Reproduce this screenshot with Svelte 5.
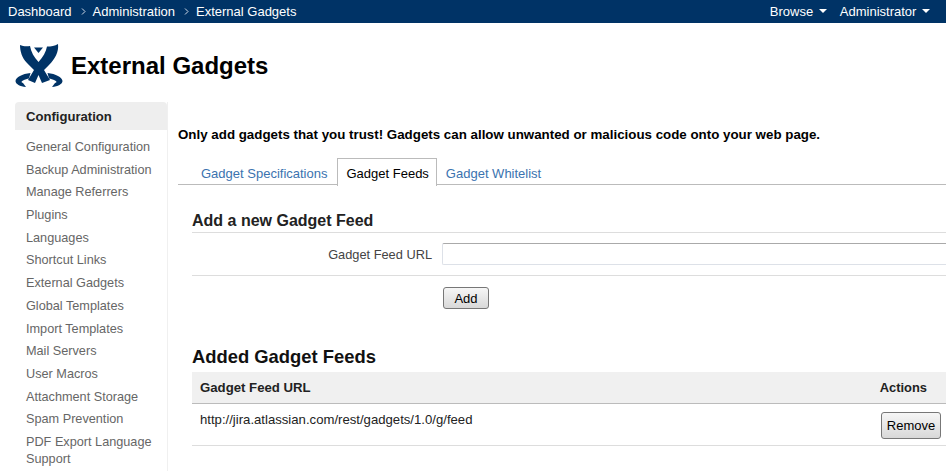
<script>
	const crumbs = ['Dashboard', 'Administration', 'External Gadgets']
	const links = [
		'General Configuration',
		'Backup Administration',
		'Manage Referrers',
		'Plugins',
		'Languages',
		'Shortcut Links',
		'External Gadgets',
		'Global Templates',
		'Import Templates',
		'Mail Servers',
		'User Macros',
		'Attachment Storage',
		'Spam Prevention',
		'PDF Export Language Support'
	]
</script>

<div class="page">
	<header class="topbar">
		<nav class="crumbs">
			{#each crumbs as crumb, i}
				{#if i > 0}
					<svg class="sep" width="5" height="7" viewBox="0 0 5 7"><path d="M1 .5 4 3.5 1 6.5" fill="none" stroke="#cfd9e6" stroke-width="1" /></svg>
				{/if}
				<span>{crumb}</span>
			{/each}
		</nav>
		<div class="menus">
			<span class="menu">Browse <i class="caret"></i></span>
			<span class="menu">Administrator <i class="caret"></i></span>
		</div>
	</header>

	<div class="title">
		<svg class="logo" width="52" height="48" viewBox="0 0 52 48">
			<path fill="#003366" d="M7 3 C10 4.500 14 4.500 17 4 C18 10 21 15 25.500 20 C30 15 33 10 34 4.500 C38 4.500 42 4 45 2 C46 10 42 17 36 23 L31 28 L37 38 L29 41 L25.500 33 L22 41 L15 38 L21 28 L14 21 C9 16 7 9 7 3 Z" />
			<path fill="#003366" d="M21 5.500 L30 5.500 L25.500 11 Z" />
			<path fill="#003366" d="M17.500 31 C9 32 3 35 2.500 39 C2.500 42 7 44.500 13 45 L10 41 C8 40.500 8 39.500 10 38.500 C12 37.500 14.500 36.500 16 36.500 Z" />
			<path fill="#003366" d="M34.500 31 C43 32 49 35 49.500 39 C49.500 42 45 44.500 39 45 L42 41 C44 40.500 44 39.500 42 38.500 C40 37.500 37.500 36.500 36 36.500 Z" />
		</svg>
		<h1>External Gadgets</h1>
	</div>

	<div class="body">
		<aside class="side">
			<h2>Configuration</h2>
			<ul>
				{#each links as link}
					<li>{link}</li>
				{/each}
			</ul>
		</aside>

		<main class="content">
			<p class="warn">Only add gadgets that you trust! Gadgets can allow unwanted or malicious code onto your web page.</p>

			<div class="tabs">
				<span class="tab">Gadget Specifications</span>
				<span class="tab active">Gadget Feeds</span>
				<span class="tab">Gadget Whitelist</span>
			</div>

			<section class="panel">
				<h3>Add a new Gadget Feed</h3>
				<div class="field">
					<label for="feed">Gadget Feed URL</label>
					<input id="feed" type="text" />
				</div>
				<div class="actions">
					<button>Add</button>
				</div>

				<h3 class="added">Added Gadget Feeds</h3>
				<div class="thead">
					<span>Gadget Feed URL</span>
					<span class="col-actions">Actions</span>
				</div>
				<div class="row">
					<span class="url">http://jira.atlassian.com/rest/gadgets/1.0/g/feed</span>
					<button>Remove</button>
				</div>
			</section>
		</main>
	</div>
</div>

<style>
	:global(body) {
		margin: 0;
		background: #fff;
		overflow: hidden;
	}
	.page {
		width: 946px;
		height: 471px;
		overflow: hidden;
		font-family: "Liberation Sans", Arial, sans-serif;
		font-size: 13px;
		color: #333;
	}
	.topbar {
		height: 23px;
		background: #003366;
		color: #fff;
		display: flex;
		justify-content: space-between;
		align-items: center;
		padding: 0 16px 0 8px;
		font-size: 13px;
	}
	.crumbs {
		display: flex;
		align-items: center;
	}
	.sep {
		margin: 0 7px 0 9px;
	}
	.menus {
		display: flex;
		gap: 13px;
	}
	.caret {
		display: inline-block;
		width: 0;
		height: 0;
		border-left: 4px solid transparent;
		border-right: 4px solid transparent;
		border-top: 4px solid #fff;
		margin-left: 2px;
		vertical-align: 3px;
	}
	.title {
		display: flex;
		align-items: center;
		height: 79px;
		padding: 7px 0 0 13px;
		box-sizing: border-box;
	}
	.logo {
		margin-right: 6px;
	}
	h1 {
		margin: 0;
		font-size: 24px;
		font-weight: bold;
		color: #000;
	}
	.body {
		display: flex;
		padding-left: 15px;
	}
	.side {
		width: 153px;
		flex: none;
		box-sizing: border-box;
		border-right: 1px solid #f0f0f0;
	}
	.side h2 {
		margin: 0;
		height: 28px;
		line-height: 29px;
		padding-left: 11px;
		background: #eeeeee;
		border-radius: 4px 4px 0 0;
		font-size: 13.100px;
		color: #222;
	}
	.side ul {
		list-style: none;
		margin: 6px 0 0;
		padding: 0 0 0 11px;
		font-size: 12.700px;
	}
	.side li {
		line-height: 17px;
		padding: 3px 0 2.700px;
		color: #666;
	}
	.content {
		flex: 1;
		min-width: 0;
		padding-left: 10px;
	}
	.warn {
		margin: 24px 0 0;
		font-weight: bold;
		color: #000;
		font-size: 13.330px;
		line-height: 17px;
	}
	.tabs {
		display: flex;
		margin-top: 15px;
		height: 26px;
		padding-left: 14px;
		border-bottom: 1px solid #bbb;
	}
	.tab {
		padding: 0 9px;
		line-height: 31px;
		color: #3b73af;
	}
	.tab:first-child {
		padding-right: 10px;
	}
	.tab.active {
		color: #000;
		background: #fff;
		border: 1px solid #bbb;
		border-bottom: 0;
		height: 26px;
		padding: 0 7px 1px 8px;
		line-height: 29px;
	}
	.panel {
		padding-left: 14px;
	}
	h3 {
		margin: 0;
		font-size: 16px;
		font-weight: bold;
		color: #222;
	}
	.panel > h3:first-child {
		margin-top: 25px;
		line-height: 21px;
		padding-bottom: 1px;
		border-bottom: 1px solid #ddd;
	}
	.field {
		display: flex;
		align-items: center;
		height: 42px;
		border-bottom: 1px solid #ddd;
	}
	.field label {
		width: 240px;
		text-align: right;
		color: #444;
		font-size: 12.800px;
	}
	.field input {
		margin-left: 10px;
		flex: 1;
		min-width: 0;
		height: 22px;
		padding: 0;
		box-sizing: border-box;
		border: 1px solid #dde1e8;
		border-top-color: #aaa;
		border-right: 0;
		border-radius: 2px 0 0 2px;
	}
	.actions {
		padding: 11px 0 0 251px;
	}
	button {
		font-family: inherit;
		font-size: 13px;
		color: #000;
		height: 22px;
		width: 46px;
		padding: 0;
		border: 1px solid #777;
		border-radius: 3px;
		background: linear-gradient(#f6f6f6, #d8d8d8);
	}
	h3.added {
		margin-top: 37px;
		font-size: 18.400px;
		line-height: 21px;
		color: #111;
	}
	.thead {
		display: flex;
		justify-content: space-between;
		margin-top: 5px;
		height: 31px;
		line-height: 32px;
		padding: 0 19px 0 8px;
		background: #f0f0f0;
		border-bottom: 1px solid #bbb;
		font-weight: bold;
		color: #222;
		font-size: 13.200px;
	}
	.col-actions {
		font-size: 12.900px;
	}
	.row {
		display: flex;
		justify-content: space-between;
		padding: 8px 5px 6px 8px;
		height: 27px;
		border-bottom: 1px solid #ddd;
	}
	.row button {
		height: 27px;
		width: 60px;
	}
	.url {
		color: #222;
		font-size: 13.150px;
		line-height: 16px;
	}
</style>
